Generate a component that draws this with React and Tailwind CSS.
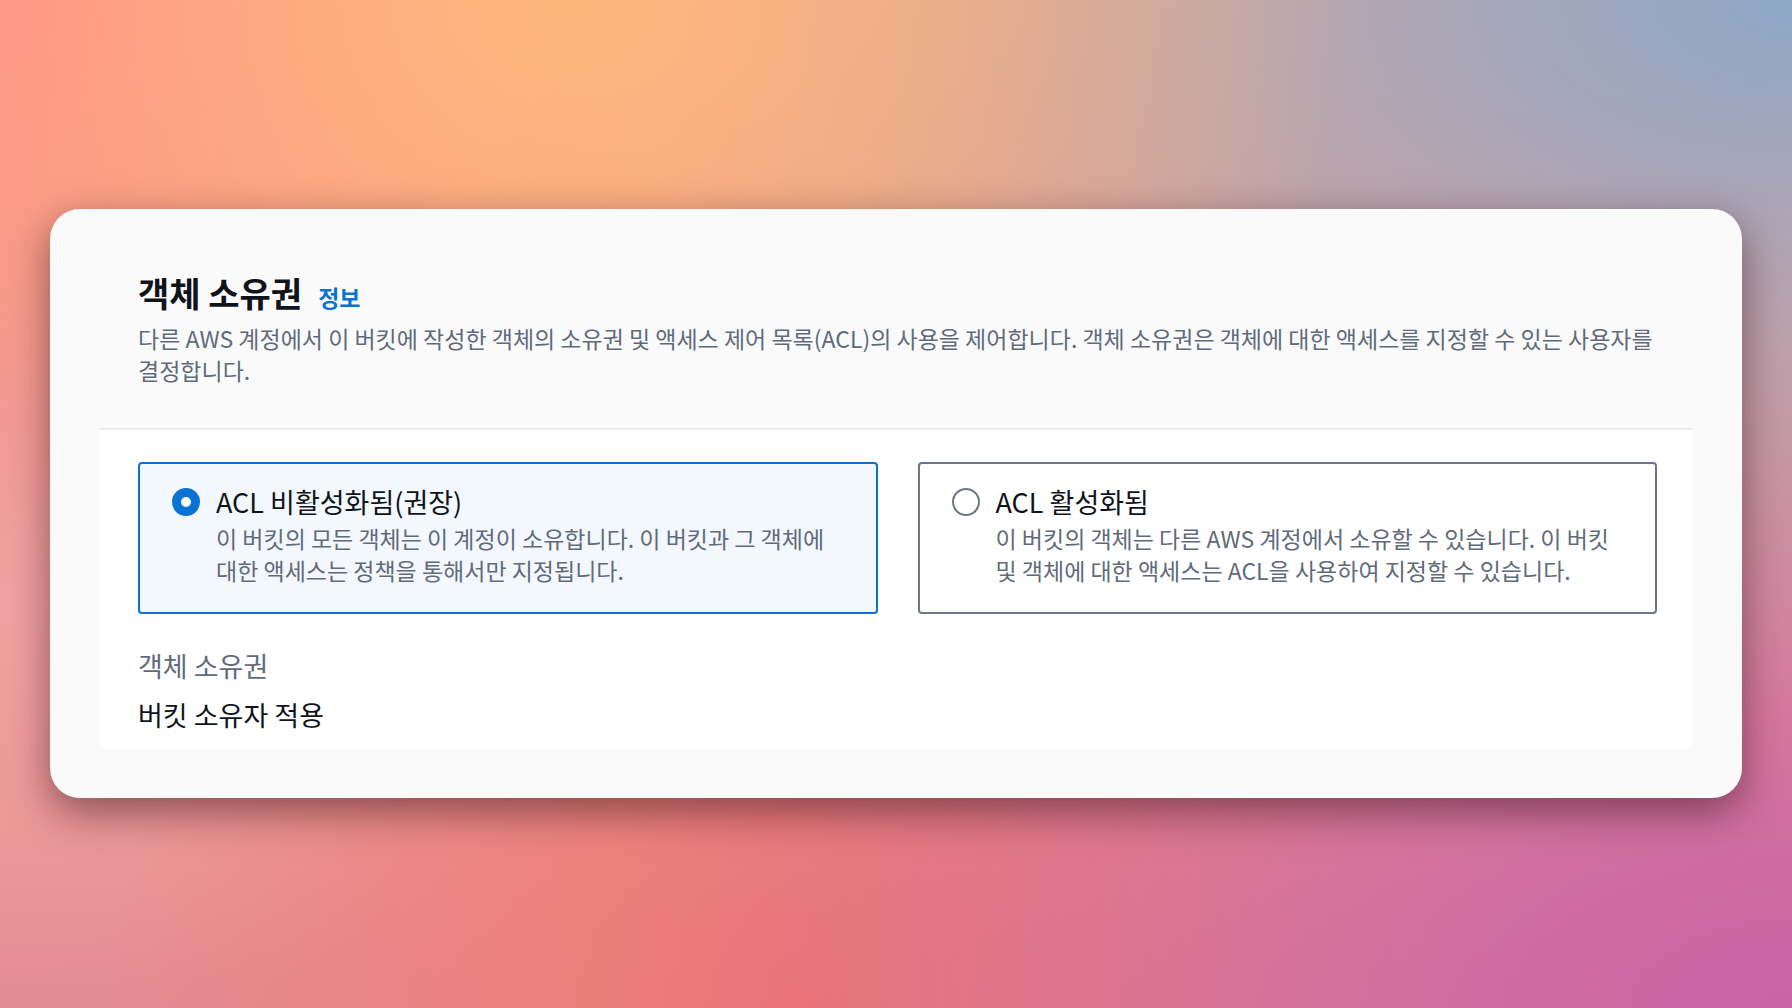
import React, { useState } from "react";

const OPTIONS = [
  {
    id: "disabled",
    label: "ACL 비활성화됨(권장)",
    desc: "이 버킷의 모든 객체는 이 계정이 소유합니다. 이 버킷과 그 객체에 대한 액세스는 정책을 통해서만 지정됩니다.",
  },
  {
    id: "enabled",
    label: "ACL 활성화됨",
    desc: "이 버킷의 객체는 다른 AWS 계정에서 소유할 수 있습니다. 이 버킷 및 객체에 대한 액세스는 ACL을 사용하여 지정할 수 있습니다.",
  },
];

const RadioTile = ({ option, checked, onSelect }) => (
  <div
    onClick={() => onSelect(option.id)}
    className={`cursor-pointer rounded-[4px] border-2 pl-[32px] pr-[32px] pt-[20px] pb-[26px] ${
      checked ? "border-[#0972d3] bg-[#f2f8fd]" : "border-[#6c7684] bg-white"
    }`}
  >
    <div className="flex items-center gap-4">
      {checked ? (
        <span className="w-7 h-7 shrink-0 rounded-full border-[9px] border-[#0972d3] bg-white" />
      ) : (
        <span className="w-7 h-7 shrink-0 rounded-full border-2 border-[#6c7684] bg-white" />
      )}
      <span className="text-[27px] leading-[36px] text-[#0f141a]">{option.label}</span>
    </div>
    <p className="mt-[2px] pl-[44px] text-[23px] leading-[32px] text-[#5f6b7a] break-keep">{option.desc}</p>
  </div>
);

export default function App() {
  const [selected, setSelected] = useState("disabled");

  return (
    <div className="w-full h-[1008px] overflow-hidden pt-[209px] px-[50px] font-['Noto_Sans_CJK_KR','Noto_Sans',sans-serif] bg-[radial-gradient(ellipse_at_32%_0%,#ffb77b_0%,transparent_45%),radial-gradient(ellipse_at_100%_0%,#8ea8c8_0%,transparent_50%),radial-gradient(ellipse_at_0%_0%,#ff8d8c_0%,transparent_38%),radial-gradient(ellipse_at_100%_100%,#c863a6_0%,transparent_48%),radial-gradient(ellipse_at_45%_100%,#f0786e_0%,transparent_50%),radial-gradient(ellipse_at_0%_60%,#f2a2a2_0%,transparent_45%),linear-gradient(180deg,#f6a488_0%,#e48c94_100%)]">
      <div className="rounded-[30px] bg-[#fafafa] px-[50px] pt-[64px] pb-[49px] shadow-[0_14px_40px_rgba(60,20,30,0.55)]">
        {/* header */}
        <div className="pl-[38px] pr-[20px] pb-[42px]">
          <div className="flex items-baseline gap-[16px]">
            <h2 className="text-[34px] leading-[40px] font-bold text-[#0f141a]">객체 소유권</h2>
            <a className="text-[23px] leading-[32px] font-bold text-[#0972d3] cursor-pointer">정보</a>
          </div>
          <p className="mt-[9px] text-[23px] leading-[32px] text-[#5f6b7a] break-keep">
            다른 AWS 계정에서 이 버킷에 작성한 객체의 소유권 및 액세스 제어 목록(ACL)의 사용을 제어합니다. 객체 소유권은 객체에 대한 액세스를 지정할 수 있는 사용자를 결정합니다.
          </p>
        </div>

        {/* panel */}
        <div className="bg-white border-t-2 border-[#ebebeb] pl-[38px] pr-[35px] pt-[32px] pb-[16px]">
          <div className="grid grid-cols-2 gap-[40px]">
            {OPTIONS.map((o) => (
              <RadioTile key={o.id} option={o} checked={selected === o.id} onSelect={setSelected} />
            ))}
          </div>

          <div className="mt-[34px]">
            <div className="text-[27px] leading-[36px] text-[#5f6b7a]">객체 소유권</div>
            <div className="mt-[13px] text-[27px] leading-[36px] text-[#0f141a]">
              {selected === "disabled" ? "버킷 소유자 적용" : "버킷 소유자 선호"}
            </div>
          </div>
        </div>
      </div>
    </div>
  );
}
